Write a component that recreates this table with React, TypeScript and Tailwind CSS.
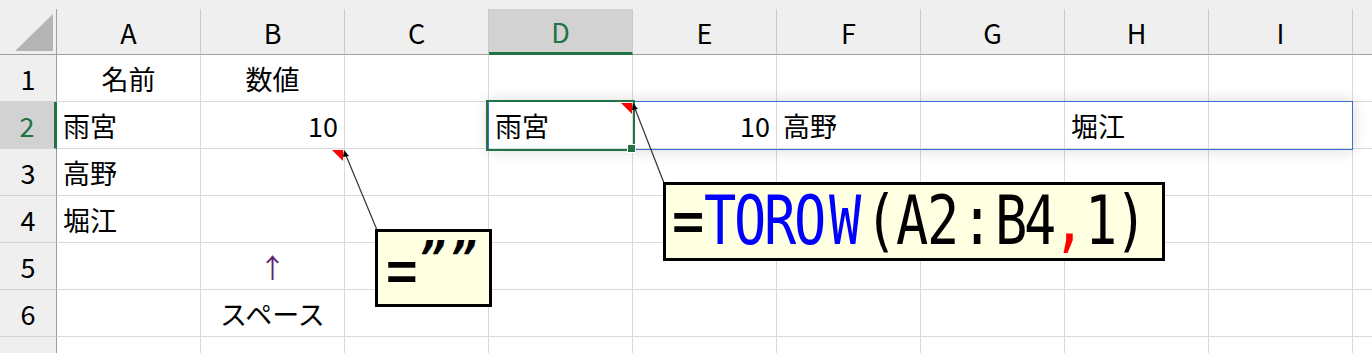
import React from "react";

const COLS = ["A", "B", "C", "D", "E", "F", "G", "H", "I", "J"];
const ROWS = [1, 2, 3, 4, 5, 6, 7];

type Cell = { text: string; align?: "left" | "right" | "center"; tone?: string };

// セルの中身（行番号 -> 列 -> 内容）
const DATA: Record<number, Record<string, Cell>> = {
  1: { A: { text: "名前", align: "center" }, B: { text: "数値", align: "center" } },
  2: {
    A: { text: "雨宮" },
    B: { text: "10", align: "right" },
    D: { text: "雨宮" },
    E: { text: "10", align: "right" },
    F: { text: "高野" },
    H: { text: "堀江" },
  },
  3: { A: { text: "高野" } },
  4: { A: { text: "堀江" } },
  5: { B: { text: "↑", align: "center", tone: "text-[#5e2370]" } },
  6: { B: { text: "スペース", align: "center" } },
};

const ACTIVE_COL = "D";
const ACTIVE_ROW = 2;

// 吹き出しの数式：文字ごとの幅と色
const FORMULA: [string, string, string][] = [
  ["=", "w-[33px]", "text-black"],
  ["T", "w-[31px]", "text-[#0000ff]"],
  ["O", "w-[29px]", "text-[#0000ff]"],
  ["R", "w-[30px]", "text-[#0000ff]"],
  ["O", "w-[31px]", "text-[#0000ff]"],
  ["W", "w-[38px]", "text-[#0000ff]"],
  ["(", "w-[34px]", "text-black"],
  ["A", "w-[28px]", "text-black"],
  ["2", "w-[34px]", "text-black"],
  [":", "w-[35px]", "text-black"],
  ["B", "w-[32px]", "text-black"],
  ["4", "w-[27px]", "text-black"],
  [",", "w-[31px]", "text-[#ff0000]"],
  ["1", "w-[33px]", "text-black"],
  [")", "w-[27px]", "text-black"],
];

function ColumnHeader({ name }: { name: string }) {
  const active = name === ACTIVE_COL;
  return (
    <div
      className={`flex h-[46px] w-[144px] shrink-0 items-center justify-center border-r border-[#c9c9c9] ${
        active
          ? "border-b-[3px] border-b-[#217346] bg-[#d2d2d2] text-[#217346]"
          : "border-b border-b-[#9f9f9f] text-black"
      }`}
    >
      <span className="pt-[2px]">{name === "J" ? "" : name}</span>
    </div>
  );
}

function RowHeader({ n }: { n: number }) {
  const active = n === ACTIVE_ROW;
  return (
    <div
      className={`flex h-[47px] w-[57px] shrink-0 items-center justify-center border-b border-b-[#d4d4d4] ${
        active
          ? "border-r-[3px] border-r-[#217346] bg-[#d2d2d2] text-[#217346]"
          : "border-r border-r-[#9f9f9f] bg-[#efefef] text-black"
      }`}
    >
      {n}
    </div>
  );
}

function GridCell({ cell }: { cell?: Cell }) {
  const align =
    cell?.align === "right" ? "justify-end pr-[6px]" : cell?.align === "center" ? "justify-center" : "justify-start pl-[6px]";
  return (
    <div className={`flex h-[47px] w-[144px] shrink-0 items-center border-r border-b border-[#dadada] ${align}`}>
      {cell && <span className={cell.tone ?? "text-black"}>{cell.text}</span>}
    </div>
  );
}

export default function App() {
  return (
    <div className="relative h-[353px] w-[1372px] overflow-hidden bg-white font-['Noto_Sans_CJK_JP',sans-serif] text-[27px] leading-none">
      {/* 列見出し */}
      <div className="flex bg-[#efefef] pt-[9px]">
        <div className="h-[46px] w-[57px] shrink-0 border-r border-b border-r-[#9f9f9f] border-b-[#9f9f9f]">
          <svg width="56" height="45" viewBox="0 0 56 45">
            <polygon points="53,5 53,42 15,42" fill="#b4b4b4" />
          </svg>
        </div>
        {COLS.map((c) => (
          <ColumnHeader key={c} name={c} />
        ))}
      </div>

      {/* 行 */}
      {ROWS.map((r) => (
        <div key={r} className="flex">
          <RowHeader n={r} />
          {COLS.map((c) => (
            <GridCell key={c} cell={DATA[r]?.[c]} />
          ))}
        </div>
      ))}

      {/* スピル範囲 */}
      <div className="absolute left-[488px] top-[101px] h-[49px] w-[865px] border border-[#3b6fcf] shadow-[0_0_14px_rgba(0,0,0,0.16)]" />

      {/* 選択セル D2 */}
      <div className="absolute left-[486px] top-[100px] h-[51px] w-[149px] border-2 border-[#217346]" />
      <div className="absolute left-[627px] top-[144px] h-[9px] w-[9px] border border-white bg-[#217346]" />

      {/* コメントの引き出し線 */}
      <svg className="pointer-events-none absolute inset-0" width="1372" height="353">
        <polygon points="332,150 343,150 343,161" fill="#ff0000" />
        <polygon points="621,103 632,103 632,114" fill="#ff0000" />
        <line x1="345" y1="153" x2="377" y2="230" stroke="#333" strokeWidth="1.2" />
        <polygon points="344,150 349,156 343,157" fill="#000" />
        <line x1="634" y1="106" x2="664" y2="183" stroke="#333" strokeWidth="1.2" />
        <polygon points="633,103 638,109 632,110" fill="#000" />
      </svg>

      {/* 吹き出し1 */}
      <div className="absolute left-[375px] top-[229px] flex h-[78px] w-[117px] items-start border-[3px] border-black bg-[#ffffe1] pl-[8px] leading-none">
        <span className="mt-[12px] font-['Liberation_Sans',sans-serif] text-[54px] font-bold">=</span>
        <span className="mt-[5px] ml-[1px] flex font-['DejaVu_Sans_Mono',monospace] text-[44px] font-bold italic">
          <span className="w-[31px]">”</span>
          <span>”</span>
        </span>
      </div>

      {/* 吹き出し2 */}
      <div className="absolute left-[663px] top-[182px] flex h-[79px] w-[502px] items-center border-[3px] border-black bg-[#ffffe1] pl-[6px]">
        {FORMULA.map(([ch, w, tone], i) => (
          <span key={i} className={`inline-flex justify-center ${w} ${tone}`}>
            <span className="inline-block scale-x-[0.8] font-['DejaVu_Sans_Mono',monospace] text-[67px] leading-none">{ch}</span>
          </span>
        ))}
      </div>
    </div>
  );
}
